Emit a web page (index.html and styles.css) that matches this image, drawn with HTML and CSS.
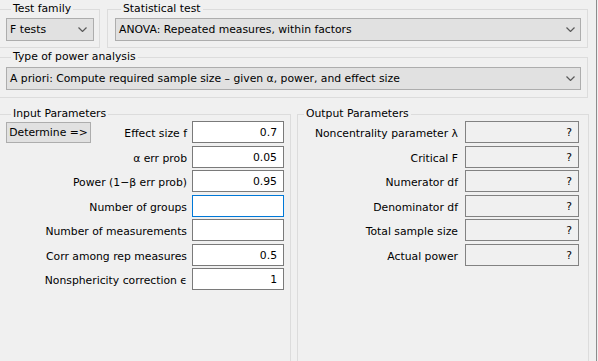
FILE: index.html
```html
<!DOCTYPE html>
<html>
<head>
<meta charset="utf-8">
<link rel="stylesheet" href="styles.css">
</head>
<body>
<div class="window">
  <div class="main">
    <div class="toprow">
      <fieldset class="group g-family">
        <legend>Test family</legend>
        <div class="select s-family"><span>F tests</span><svg class="chev" width="9" height="5" viewBox="0 0 9 5"><polyline points="0.5,0.5 4.5,4.5 8.5,0.5"/></svg></div>
      </fieldset>
      <fieldset class="group g-test">
        <legend>Statistical test</legend>
        <div class="select"><span>ANOVA: Repeated measures, within factors</span><svg class="chev" width="9" height="5" viewBox="0 0 9 5"><polyline points="0.5,0.5 4.5,4.5 8.5,0.5"/></svg></div>
      </fieldset>
    </div>
    <fieldset class="group g-type">
      <legend>Type of power analysis</legend>
      <div class="select"><span>A priori: Compute required sample size – given α, power, and effect size</span><svg class="chev" width="9" height="5" viewBox="0 0 9 5"><polyline points="0.5,0.5 4.5,4.5 8.5,0.5"/></svg></div>
    </fieldset>
    <div class="params">
      <fieldset class="group g-input">
        <legend>Input Parameters</legend>
        <div class="rows">
          <div class="row"><button class="btn">Determine =&gt;</button><span class="lbl">Effect size f</span><div class="field">0.7</div></div>
          <div class="row"><span class="lbl">α err prob</span><div class="field">0.05</div></div>
          <div class="row"><span class="lbl">Power (1−β err prob)</span><div class="field">0.95</div></div>
          <div class="row"><span class="lbl">Number of groups</span><div class="field focus"></div></div>
          <div class="row"><span class="lbl">Number of measurements</span><div class="field"></div></div>
          <div class="row"><span class="lbl">Corr among rep measures</span><div class="field">0.5</div></div>
          <div class="row"><span class="lbl">Nonsphericity correction ϵ</span><div class="field">1</div></div>
        </div>
      </fieldset>
      <fieldset class="group g-output">
        <legend>Output Parameters</legend>
        <div class="rows">
          <div class="row"><span class="lbl">Noncentrality parameter λ</span><div class="field out">?</div></div>
          <div class="row"><span class="lbl">Critical F</span><div class="field out">?</div></div>
          <div class="row"><span class="lbl">Numerator df</span><div class="field out">?</div></div>
          <div class="row"><span class="lbl">Denominator df</span><div class="field out">?</div></div>
          <div class="row"><span class="lbl">Total sample size</span><div class="field out">?</div></div>
          <div class="row"><span class="lbl">Actual power</span><div class="field out">?</div></div>
        </div>
      </fieldset>
    </div>
  </div>
  <div class="edge"></div>
</div>
</body>
</html>
```
FILE: styles.css
```css
html, body {
  margin: 0;
  padding: 0;
  background: #f0f0f0;
  width: 598px;
  height: 361px;
  overflow: hidden;
}
body {
  font-family: "DejaVu Sans", Verdana, sans-serif;
  font-size: 10.8px;
  color: #000;
}
.window {
  display: flex;
  height: 361px;
}
.main {
  width: 596px;
  overflow: hidden;
}
.edge {
  width: 1px;
  background: #8c8c8c;
}
.toprow {
  display: flex;
  margin-top: 3px;
}
.group {
  margin: 0;
  padding: 0;
  border: 1px solid #dcdcdc;
  min-width: 0;
  box-sizing: border-box;
}
.group legend {
  padding: 0 2px;
  margin-left: 5px;
  line-height: 12px;
}
.g-family {
  margin-left: -1px;
  width: 101px;
  padding: 3px 5px 6px 6px;
}
.g-test {
  margin-left: 7px;
  width: 481px;
  padding: 3px 6px 6px 7px;
}
.g-test legend { margin-left: 6px; }
.g-type {
  margin-left: -1px;
  margin-top: 3px;
  width: 589px;
  padding: 4px 6px 7px 6px;
}
.select {
  height: 23px;
  box-sizing: border-box;
  border: 1px solid #adadad;
  background: #e1e1e1;
  display: flex;
  align-items: center;
  justify-content: space-between;
  padding: 0 5px 0 3px;
  line-height: 21px;
  white-space: nowrap;
}
.s-family { width: 88px; padding-right: 6px; }
.chev polyline {
  fill: none;
  stroke: #5a5a5a;
  stroke-width: 1.2;
}
.params {
  display: flex;
  margin-top: 10px;
}
.g-input {
  margin-left: -1px;
  width: 292px;
  height: 270px;
  padding: 1px 6px 0 6px;
}
.g-output {
  margin-left: 6px;
  width: 292px;
  height: 270px;
  padding: 1px 9px 0 0;
}
.g-output legend { margin-left: 6px; }
.rows {
  display: flex;
  flex-direction: column;
  gap: 2.5px;
}
.row {
  display: flex;
  align-items: center;
  justify-content: flex-end;
  height: 22px;
}
.lbl {
  padding-top: 3px;
  line-height: 19px;
  white-space: nowrap;
  margin-right: 5px;
}
.g-output .lbl { margin-right: 7px; }
.field {
  width: 92px;
  height: 22px;
  box-sizing: border-box;
  border: 1px solid #7a7a7a;
  background: #fff;
  text-align: right;
  padding: 2px 6px 0 4px;
  line-height: 18px;
}
.field.focus { border-color: #0078d7; }
.field.out {
  width: 114px;
  background: #f0f0f0;
  border-color: #828282;
}
.btn {
  margin: 0 auto 0 0;
  width: 85px;
  height: 21px;
  box-sizing: border-box;
  border: 1px solid #adadad;
  background: #e1e1e1;
  font: inherit;
  color: #000;
  padding: 0;
  line-height: 19px;
  text-align: center;
  align-self: flex-start;
  margin-top: 1px;
}
```
